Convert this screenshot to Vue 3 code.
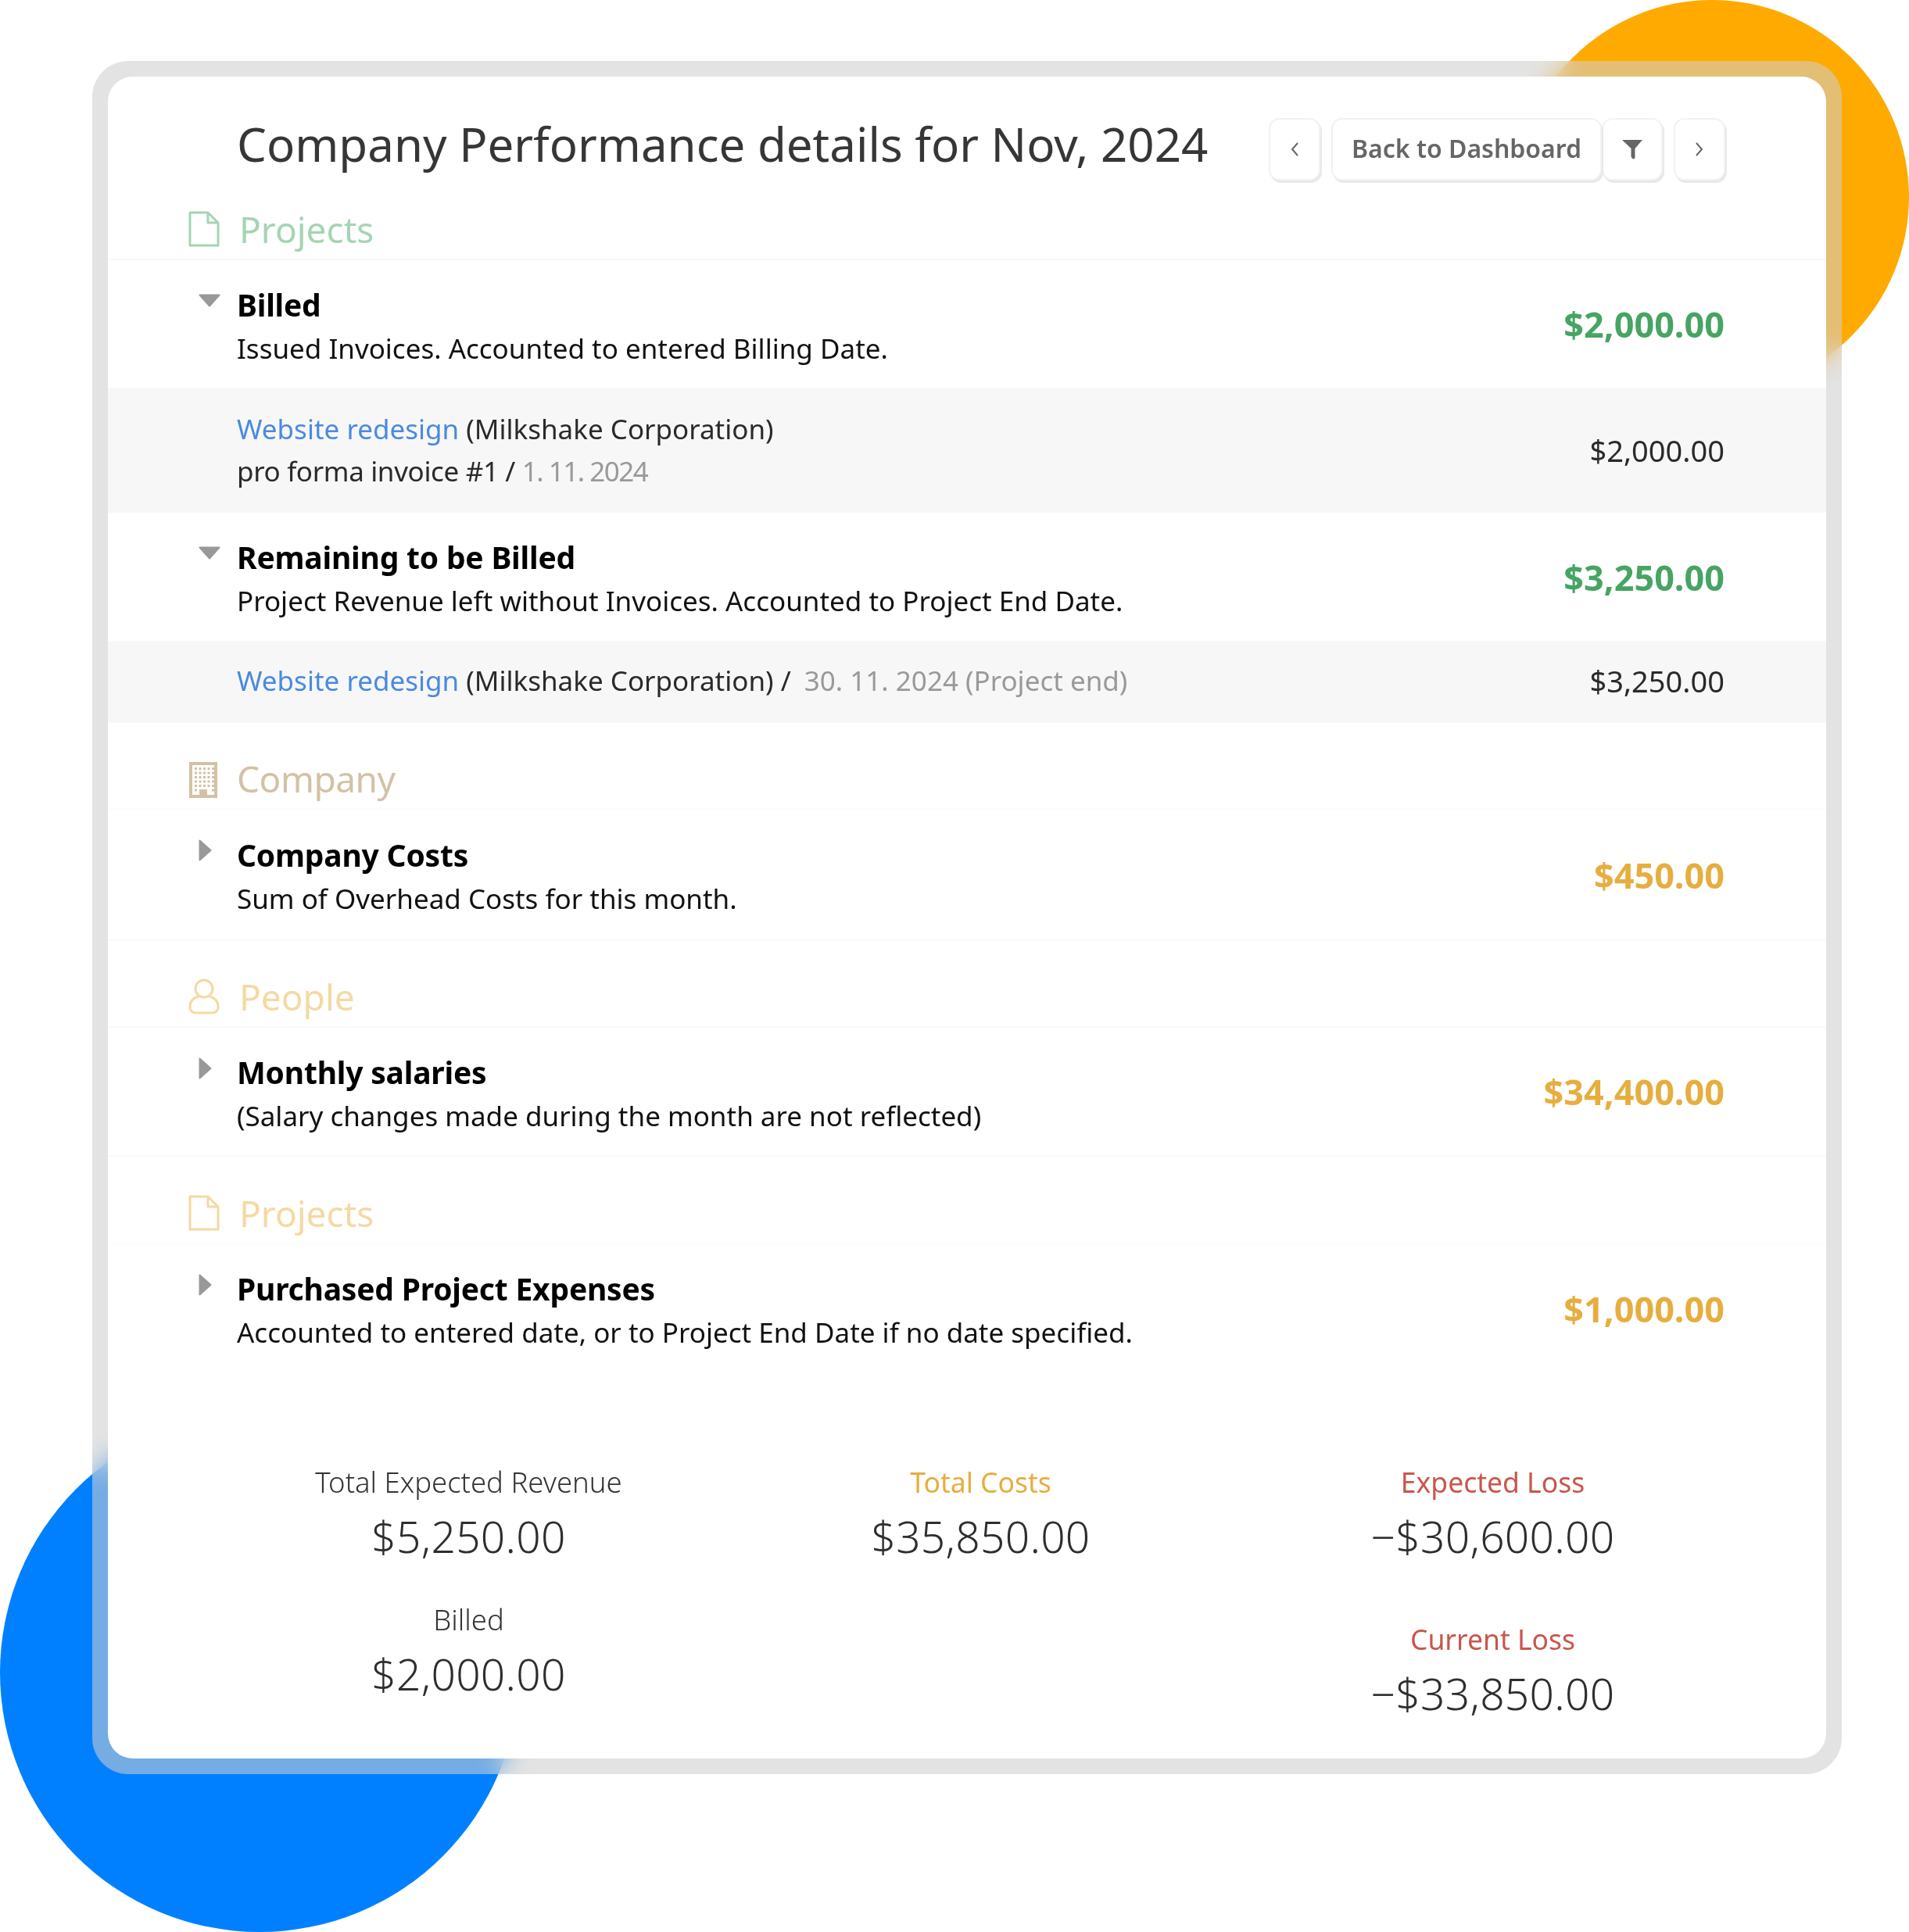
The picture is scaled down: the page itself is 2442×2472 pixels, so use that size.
<template>
  <div class="page">
    <div class="blob blob-orange"></div>
    <div class="blob blob-blue"></div>

    <div class="frame">
      <div class="card">
        <header class="head">
          <h1 class="title">Company Performance details for Nov, 2024</h1>
          <div class="nav">
            <button class="btn btn-arrow">
              <svg width="14" height="22" viewBox="0 0 14 22"><path d="M11 3 4 11l7 8" fill="none" stroke="#666" stroke-width="2"/></svg>
            </button>
            <div class="nav-group">
              <button class="btn btn-back">Back to Dashboard</button>
              <button class="btn btn-filter">
                <svg width="28" height="26" viewBox="0 0 28 26"><path d="M1 1h26L17.500 12v11c0 1.500-.8 2.500-1.800 2.500-1.200 0-3.200-2-3.200-3.500V12z" fill="#666"/></svg>
              </button>
            </div>
            <button class="btn btn-arrow">
              <svg width="14" height="22" viewBox="0 0 14 22"><path d="M3 3l7 8-7 8" fill="none" stroke="#666" stroke-width="2"/></svg>
            </button>
          </div>
        </header>

        <div class="section section-first green">
          <svg class="sec-icon" width="40" height="46" viewBox="0 0 40 46"><path d="M2 2h23l13 13v29H2zM25 2v13h13" fill="none" stroke="currentColor" stroke-width="3" stroke-linejoin="round"/></svg>
          <span class="sec-name">Projects</span>
        </div>

        <div class="row">
          <svg class="tri tri-down" width="28" height="17" viewBox="0 0 28 17"><path d="M1.500 1.500h25L14 15.500z" fill="#999" stroke="#999" stroke-width="2" stroke-linejoin="round"/></svg>
          <div class="row-text">
            <div class="row-title">Billed</div>
            <div class="row-desc">Issued Invoices. Accounted to entered Billing Date.</div>
          </div>
          <div class="amount amount-green">$2,000.00</div>
        </div>
        <div class="detail">
          <div class="detail-text">
            <div><a class="link">Website redesign</a> (Milkshake Corporation)</div>
            <div class="line-short">pro forma invoice #1 / <span class="muted muted-short">1. 11. 2024</span></div>
          </div>
          <div class="detail-amount">$2,000.00</div>
        </div>

        <div class="row row-plain">
          <svg class="tri tri-down" width="28" height="17" viewBox="0 0 28 17"><path d="M1.500 1.500h25L14 15.500z" fill="#999" stroke="#999" stroke-width="2" stroke-linejoin="round"/></svg>
          <div class="row-text">
            <div class="row-title">Remaining to be Billed</div>
            <div class="row-desc">Project Revenue left without Invoices. Accounted to Project End Date.</div>
          </div>
          <div class="amount amount-green">$3,250.00</div>
        </div>
        <div class="detail detail-single">
          <div class="detail-text"><a class="link">Website redesign</a> (Milkshake Corporation) / <span class="muted muted-end">30. 11. 2024 (Project end)</span></div>
          <div class="detail-amount">$3,250.00</div>
        </div>

        <div class="section section-faint tan">
          <svg class="sec-icon sec-icon-low" width="40" height="46" viewBox="0 0 40 46">
            <path fill-rule="evenodd" fill="currentColor" d="M1 0h36v46H1zM5 4v38h9v-7h10v7h9V4z"/>
            <g fill="currentColor">
              <rect v-for="d in buildingDots" :key="d.k" :x="d.x" :y="d.y" width="3" height="3"/>
            </g>
          </svg>
          <span class="sec-name sec-name-tight">Company</span>
        </div>
        <div class="row row-tall">
          <svg class="tri tri-right" width="17" height="28" viewBox="0 0 17 28"><path d="M1.500 1.500v25l14-12.500z" fill="#999" stroke="#999" stroke-width="2" stroke-linejoin="round"/></svg>
          <div class="row-text">
            <div class="row-title">Company Costs</div>
            <div class="row-desc">Sum of Overhead Costs for this month.</div>
          </div>
          <div class="amount amount-yellow">$450.00</div>
        </div>

        <div class="section yellow">
          <svg class="sec-icon" width="40" height="46" viewBox="0 0 40 46">
            <circle cx="20" cy="13" r="11" fill="none" stroke="currentColor" stroke-width="3"/>
            <path d="M13 23C6 25 2 29 2 36c0 5 3 8 8 8h20c5 0 8-3 8-8 0-7-4-11-11-13" fill="none" stroke="currentColor" stroke-width="3"/>
          </svg>
          <span class="sec-name">People</span>
        </div>
        <div class="row">
          <svg class="tri tri-right" width="17" height="28" viewBox="0 0 17 28"><path d="M1.500 1.500v25l14-12.500z" fill="#999" stroke="#999" stroke-width="2" stroke-linejoin="round"/></svg>
          <div class="row-text">
            <div class="row-title">Monthly salaries</div>
            <div class="row-desc">(Salary changes made during the month are not reflected)</div>
          </div>
          <div class="amount amount-yellow">$34,400.00</div>
        </div>

        <div class="section section-faint section-last yellow">
          <svg class="sec-icon" width="40" height="46" viewBox="0 0 40 46"><path d="M2 2h23l13 13v29H2zM25 2v13h13" fill="none" stroke="currentColor" stroke-width="3" stroke-linejoin="round"/></svg>
          <span class="sec-name">Projects</span>
        </div>
        <div class="row row-plain">
          <svg class="tri tri-right" width="17" height="28" viewBox="0 0 17 28"><path d="M1.500 1.500v25l14-12.500z" fill="#999" stroke="#999" stroke-width="2" stroke-linejoin="round"/></svg>
          <div class="row-text">
            <div class="row-title">Purchased Project Expenses</div>
            <div class="row-desc">Accounted to entered date, or to Project End Date if no date specified.</div>
          </div>
          <div class="amount amount-yellow">$1,000.00</div>
        </div>

        <div class="summary">
          <div class="sum-col">
            <div class="stat">
              <div class="stat-label">Total Expected Revenue</div>
              <div class="stat-value">$5,250.00</div>
            </div>
            <div class="stat">
              <div class="stat-label">Billed</div>
              <div class="stat-value">$2,000.00</div>
            </div>
          </div>
          <div class="sum-col">
            <div class="stat">
              <div class="stat-label label-yellow">Total Costs</div>
              <div class="stat-value">$35,850.00</div>
            </div>
          </div>
          <div class="sum-col sum-col-wide">
            <div class="stat">
              <div class="stat-label label-red">Expected Loss</div>
              <div class="stat-value">−$30,600.00</div>
            </div>
            <div class="stat">
              <div class="stat-label label-red">Current Loss</div>
              <div class="stat-value">−$33,850.00</div>
            </div>
          </div>
        </div>
      </div>
    </div>
  </div>
</template>

<script setup>
const buildingDots = [];
for (let r = 0; r < 6; r++) {
  for (let c = 0; c < 5; c++) {
    if (r === 5 && c > 0 && c < 4) continue;
    buildingDots.push({ k: r + '-' + c, x: 8 + c * 5.5, y: 7 + r * 5.5 });
  }
}
</script>

<style>
body {
  background: #fff;
}
</style>

<style scoped>
.page {
  position: relative;
  width: 2442px;
  height: 2472px;
  padding: 78px 86px 0 118px;
  box-sizing: border-box;
  overflow: hidden;
  font-family: "Noto Sans", sans-serif;
  color: #111;
  background: #fff;
}

.blob {
  position: absolute;
  border-radius: 50%;
}

.blob-orange {
  top: 0;
  right: 0;
  width: 504px;
  height: 504px;
  background: #ffaa00;
}

.blob-blue {
  left: 0;
  bottom: 0;
  width: 664px;
  height: 664px;
  background: #0080ff;
}

.frame {
  position: relative;
  padding: 20px;
  height: 2192px;
  box-sizing: border-box;
  border-radius: 46px;
  background: rgba(205, 205, 205, 0.57);
  backdrop-filter: blur(16px);
}

.card {
  height: 100%;
  background: #fff;
  border-radius: 32px;
  overflow: hidden;
}

.head {
  display: flex;
  align-items: center;
  justify-content: space-between;
  height: 134px;
  padding: 52px 129px 0 165px;
  box-sizing: border-box;
}

.title {
  margin: 0 0 14px;
  font-size: 60px;
  font-weight: 400;
  color: #363636;
  white-space: nowrap;
}

.nav {
  display: flex;
  gap: 14px;
}

.nav-group {
  display: flex;
}

.btn {
  display: flex;
  align-items: center;
  justify-content: center;
  height: 80px;
  padding: 0;
  background: #fff;
  border: 2px solid #f2f2f2;
  border-radius: 14px;
  box-shadow: 2px 3px 0 #e8e8e8;
  font-family: inherit;
}

.btn-arrow {
  width: 66px;
}

.btn-back {
  position: relative;
  z-index: 1;
  width: 346px;
  padding-bottom: 3px;
  font-size: 32px;
  font-weight: 600;
  color: #666;
}

.btn-filter {
  width: 78px;
}

.section {
  display: flex;
  align-items: flex-end;
  height: 111px;
  padding: 0 0 7px 103px;
  box-sizing: border-box;
  border-bottom: 2px solid #f9f9f9;
}

.section-first {
  height: 101px;
}

.section-faint {
  border-bottom-color: #fcfcfc;
}

.section-last {
  height: 112px;
}

.sec-icon {
  flex: none;
  margin: 0 25px 8px 0;
}

.sec-icon-low {
  margin-bottom: 6px;
}

.sec-name {
  font-size: 46px;
  line-height: 62px;
}

.sec-name-tight {
  margin-left: -3px;
  letter-spacing: -0.5px;
}

.green {
  color: #a5d4b4;
}

.tan {
  color: #d2c2a5;
}

.yellow {
  color: #f4d9a2;
}

.row {
  position: relative;
  display: flex;
  align-items: center;
  justify-content: space-between;
  height: 165px;
  padding: 0 130px 0 165px;
  box-sizing: border-box;
  border-bottom: 2px solid #f9f9f9;
}

.row-plain {
  height: 164px;
  border-bottom: none;
}

.row-tall {
  height: 168px;
}

.row-text {
  margin-top: 6px;
}

.row-title {
  font-size: 39px;
  font-weight: 700;
  letter-spacing: -0.2px;
  color: #000;
  line-height: 56px;
}

.row-desc {
  font-size: 35px;
  color: #111;
  line-height: 56px;
}

.tri {
  position: absolute;
  left: 116px;
}

.tri-down {
  top: 43px;
}

.tri-right {
  top: 38px;
}

.amount {
  font-size: 45px;
  font-weight: 700;
}

.amount-green {
  color: #47a463;
}

.amount-yellow {
  color: #e6ae3f;
}

.detail {
  display: flex;
  align-items: center;
  justify-content: space-between;
  height: 158px;
  padding: 0 130px 0 165px;
  box-sizing: border-box;
  background: #f7f7f7;
  color: #2a2a2a;
}

.detail-single {
  height: 105px;
}

.detail-text {
  margin-top: -3px;
  font-size: 35px;
  line-height: 54px;
}

.detail-amount {
  margin-top: -3px;
  font-size: 38px;
}

.line-short {
  letter-spacing: -0.35px;
}

.link {
  color: #4a8ae0;
}

.muted {
  color: #999;
}

.muted-short {
  letter-spacing: -1.5px;
}

.muted-end {
  margin-left: 8px;
}

.summary {
  display: grid;
  grid-template-columns: repeat(3, 655px);
  padding: 115px 0 0 134px;
}

.stat {
  margin-bottom: 45px;
  text-align: center;
}

.stat-label {
  font-size: 36.500px;
  font-weight: 300;
  color: #333;
  line-height: 50px;
}

.stat-value {
  margin-top: 9px;
  font-size: 55px;
  font-weight: 300;
  letter-spacing: 0.3px;
  color: #2e2e2e;
  line-height: 72px;
}

.sum-col-wide .stat {
  margin-bottom: 70px;
}

.label-yellow {
  font-size: 35.500px;
  font-weight: 400;
  color: #e6ae3f;
}

.label-red {
  font-size: 35.500px;
  font-weight: 400;
  color: #c9564d;
}
</style>
